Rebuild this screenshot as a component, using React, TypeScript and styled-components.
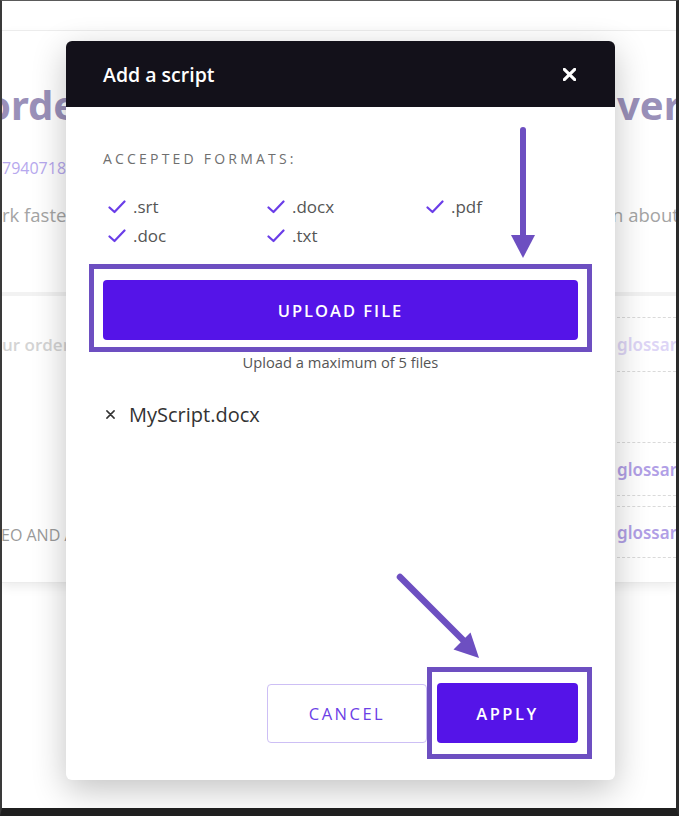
import React from 'react';
import styled, { createGlobalStyle } from 'styled-components';

const GlobalStyle = createGlobalStyle`
  html, body {
    margin: 0;
    padding: 0;
    background: #ffffff;
    font-family: 'Open Sans', 'Noto Sans', sans-serif;
  }
`;

const formats = ['.srt', '.docx', '.pdf', '.doc', '.txt'];

const CheckIcon = () => (
  <svg width="18" height="14" viewBox="0 0 18 14" fill="none">
    <path d="M1.5 7.5 L6.5 12 L16.5 1.5" stroke="#6a3de8" strokeWidth="2.2" strokeLinecap="round" strokeLinejoin="round" />
  </svg>
);

const CrossIcon = ({ size, weight, color }: { size: number; weight: number; color: string }) => (
  <svg width={size} height={size} viewBox="0 0 10 10" fill="none">
    <path d="M1 1 L9 9 M9 1 L1 9" stroke={color} strokeWidth={weight} strokeLinecap="round" />
  </svg>
);

const App: React.FC = () => {
  return (
    <>
      <GlobalStyle />
      <Frame>
        <TopBar />
        <Card>
          <Section $height={261}>
            <Column $width={220}>
              <Heading $indent={-16}>order details</Heading>
              <LinkText>7940718</LinkText>
              <BodyText $top={22} $indent={0}>rk faster and better</BodyText>
            </Column>
            <Column $width={68}>
              <Heading $indent={9}>very</Heading>
              <BodyText $top={72} $indent={4}>n about</BodyText>
            </Column>
          </Section>
          <Divider />
          <Section $height={0} $grow>
            <Column $width={220}>
              <FaintText>ur order</FaintText>
              <CapsText>EO AND AUDIO</CapsText>
            </Column>
            <Column $width={68}>
              <GlossItem $top={21} $height={55} $color="#ddd5f6">glossary</GlossItem>
              <GlossItem $top={70} $height={54} $color="#b19fe6">glossary</GlossItem>
              <GlossItem $top={10} $height={52} $color="#b19fe6">glossary</GlossItem>
            </Column>
          </Section>
        </Card>

        <Modal>
          <Header>
            <Title>Add a script</Title>
            <CloseButton>
              <CrossIcon size={13} weight={2.4} color="#ffffff" />
            </CloseButton>
          </Header>
          <Body>
            <Label>ACCEPTED FORMATS:</Label>
            <FormatGrid>
              {formats.map((f) => (
                <FormatItem key={f}>
                  <CheckIcon />
                  <span>{f}</span>
                </FormatItem>
              ))}
            </FormatGrid>
            <Highlight $pad="11px 9px 7px" $out="14px -14px 0">
              <PrimaryButton $width="100%" $spacing={2}>UPLOAD FILE</PrimaryButton>
            </Highlight>
            <Note>Upload a maximum of 5 files</Note>
            <FileRow>
              <CrossIcon size={9} weight={1.7} color="#333333" />
              <FileName>MyScript.docx</FileName>
            </FileRow>
            <Footer>
              <GhostButton>CANCEL</GhostButton>
              <Highlight $pad="11px 9px 11px 5px" $out="-16px -14px -16px -10px">
                <PrimaryButton $width="141px" $spacing={2.5}>APPLY</PrimaryButton>
              </Highlight>
            </Footer>
          </Body>
        </Modal>

        <Arrows width="674" height="807" viewBox="0 0 674 807">
          <line x1="521" y1="129" x2="521" y2="238" stroke="#6d4fc1" strokeWidth="6" strokeLinecap="round" />
          <polygon points="509,234 533,234 521,257" fill="#6d4fc1" />
          <line x1="398" y1="576" x2="462" y2="640" stroke="#6d4fc1" strokeWidth="6.5" strokeLinecap="round" />
          <polygon points="477,657 468.5,631.5 451.5,648.5" fill="#6d4fc1" />
        </Arrows>
      </Frame>
    </>
  );
};

export default App;

const Frame = styled.div`
  position: relative;
  width: 679px;
  height: 816px;
  box-sizing: border-box;
  border-left: 2px solid #3a3a3a;
  border-right: 3px solid #2a2a2a;
  border-top: 1px solid #5a5a5a;
  border-bottom: 8px solid #1f1f1f;
  background: #ffffff;
  overflow: hidden;
  display: flex;
  flex-direction: column;
`;

const TopBar = styled.div`
  height: 29px;
  flex-shrink: 0;
  border-bottom: 1px solid #efefef;
`;

const Card = styled.div`
  height: 551px;
  flex-shrink: 0;
  display: flex;
  flex-direction: column;
  background: #ffffff;
  box-shadow: 0 4px 10px rgba(0, 0, 0, 0.08);
  border-bottom: 1px solid #ececec;
`;

const Section = styled.div<{ $height: number; $grow?: boolean }>`
  display: flex;
  justify-content: space-between;
  height: ${(p) => (p.$grow ? 'auto' : `${p.$height}px`)};
  flex: ${(p) => (p.$grow ? 1 : '0 0 auto')};
`;

const Column = styled.div<{ $width: number }>`
  width: ${(p) => p.$width}px;
  display: flex;
  flex-direction: column;
  white-space: nowrap;
`;

const Heading = styled.div<{ $indent: number }>`
  margin: 49px 0 0 ${(p) => p.$indent}px;
  font-family: 'Noto Sans', sans-serif;
  font-size: 40px;
  font-weight: 700;
  line-height: 50px;
  color: #9a90b9;
`;

const LinkText = styled.div`
  margin-top: 26px;
  font-size: 16px;
  line-height: 24px;
  color: #b6a8ee;
`;

const BodyText = styled.div<{ $top: number; $indent: number }>`
  margin: ${(p) => p.$top}px 0 0 ${(p) => p.$indent}px;
  font-size: 18.5px;
  line-height: 26px;
  color: #a4a4a4;
`;

const Divider = styled.div`
  height: 4px;
  background: #f2f2f2;
`;

const FaintText = styled.div`
  margin-top: 37px;
  font-size: 17px;
  font-weight: 600;
  line-height: 24px;
  color: #d4d4d4;
`;

const CapsText = styled.div`
  margin-top: 166px;
  margin-left: -1px;
  font-size: 16px;
  line-height: 24px;
  color: #9a9a9a;
`;

const GlossItem = styled.div<{ $top: number; $height: number; $color: string }>`
  margin: ${(p) => p.$top}px 0 0 9px;
  height: ${(p) => p.$height}px;
  box-sizing: border-box;
  display: flex;
  align-items: center;
  border-top: 1px dashed #dadada;
  border-bottom: 1px dashed #dadada;
  font-family: 'Noto Sans', sans-serif;
  font-size: 17px;
  font-weight: 600;
  color: ${(p) => p.$color};
`;

const Modal = styled.div`
  position: absolute;
  left: 64px;
  top: 40px;
  width: 549px;
  height: 739px;
  z-index: 2;
  display: flex;
  flex-direction: column;
  background: #ffffff;
  border-radius: 6px;
  box-shadow: 0 10px 34px rgba(0, 0, 0, 0.24);
`;

const Header = styled.div`
  height: 66px;
  flex-shrink: 0;
  display: flex;
  align-items: center;
  justify-content: space-between;
  padding: 0 39px 0 37px;
  background: #13111a;
  border-radius: 6px 6px 0 0;
`;

const Title = styled.div`
  font-size: 19.5px;
  font-weight: 600;
  color: #ffffff;
`;

const CloseButton = styled.div`
  display: flex;
  align-items: center;
`;

const Body = styled.div`
  flex: 1;
  display: flex;
  flex-direction: column;
  padding: 0 37px 37px;
`;

const Label = styled.div`
  margin-top: 42px;
  font-size: 14px;
  line-height: 20px;
  letter-spacing: 3.2px;
  color: #6f6f6f;
`;

const FormatGrid = styled.div`
  margin-top: 23px;
  display: grid;
  grid-template-columns: repeat(3, 159px);
  grid-auto-rows: 29px;
`;

const FormatItem = styled.div`
  display: flex;
  align-items: center;
  gap: 7px;
  padding-left: 5px;
  font-size: 17px;
  color: #555555;
`;

const Highlight = styled.div<{ $pad: string; $out: string }>`
  border: 5px solid #6d4fc1;
  padding: ${(p) => p.$pad};
  margin: ${(p) => p.$out};
  background: #ffffff;
`;

const PrimaryButton = styled.div<{ $width: string; $spacing: number }>`
  width: ${(p) => p.$width};
  height: 60px;
  box-sizing: border-box;
  display: flex;
  align-items: center;
  justify-content: center;
  background: #5514e8;
  border-radius: 4px;
  color: #ffffff;
  font-size: 16.5px;
  font-weight: 600;
  letter-spacing: ${(p) => p.$spacing}px;
`;

const Note = styled.div`
  text-align: center;
  font-size: 14.7px;
  line-height: 20px;
  color: #555555;
`;

const FileRow = styled.div`
  margin-top: 28px;
  display: flex;
  align-items: center;
  gap: 14px;
  padding-left: 3px;
  height: 28px;
`;

const FileName = styled.span`
  font-size: 20px;
  color: #333333;
`;

const Footer = styled.div`
  margin-top: auto;
  display: flex;
  justify-content: flex-end;
  align-items: flex-end;
  gap: 10px;
`;

const GhostButton = styled.div`
  width: 160px;
  height: 59px;
  box-sizing: border-box;
  display: flex;
  align-items: center;
  justify-content: center;
  border: 1px solid #cdbff5;
  border-radius: 4px;
  color: #6b40e6;
  font-size: 16.5px;
  font-weight: 500;
  letter-spacing: 2.5px;
`;

const Arrows = styled.svg`
  position: absolute;
  left: 0;
  top: 0;
  z-index: 3;
  pointer-events: none;
`;
